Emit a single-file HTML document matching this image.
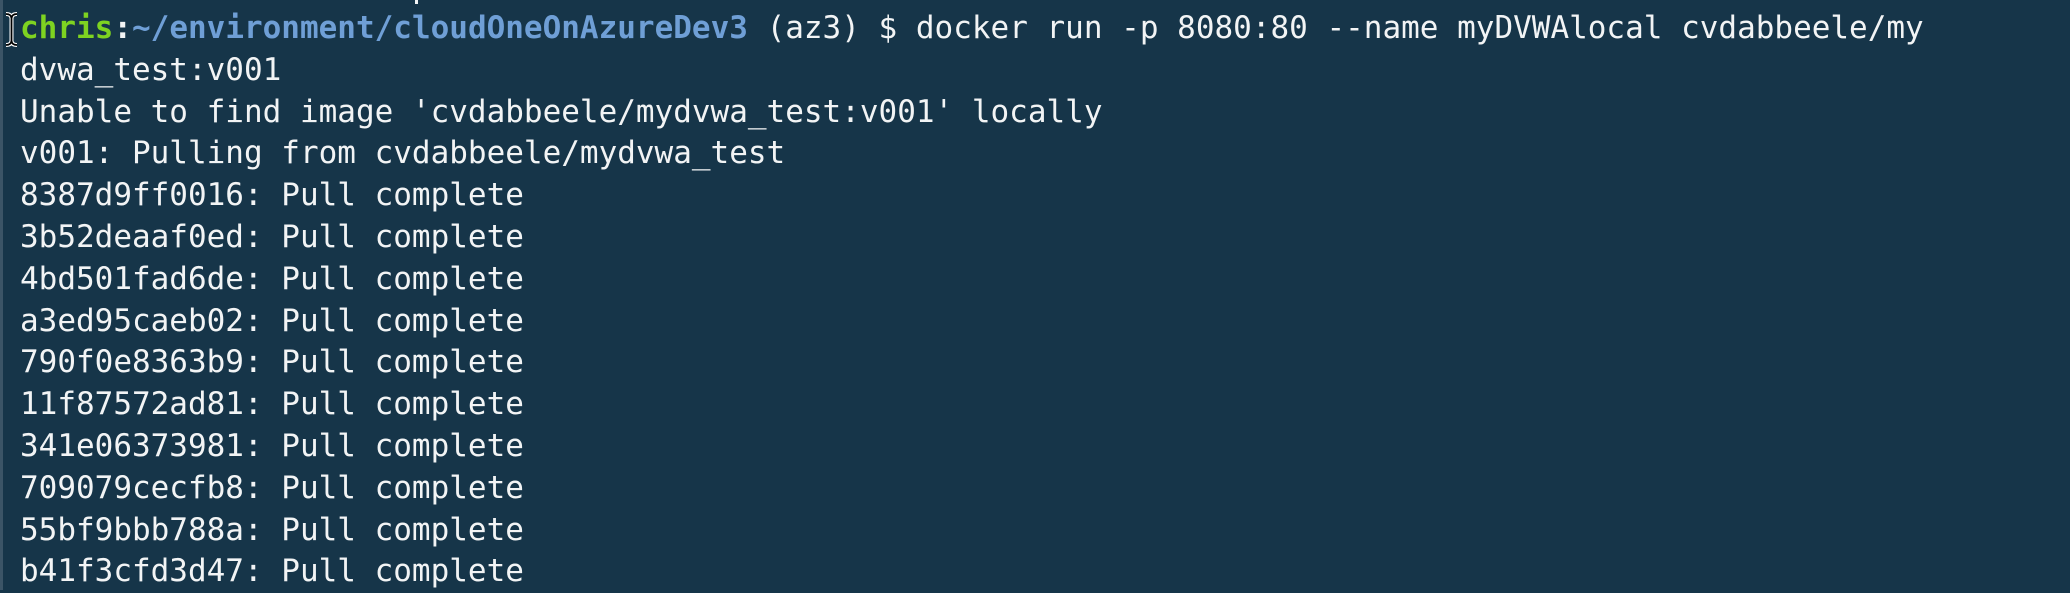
<!DOCTYPE html>
<html><head><meta charset="utf-8"><style>
html,body{margin:0;padding:0}
body{width:2070px;height:590px;overflow:hidden;background:#163549;position:relative;font-family:"DejaVu Sans Mono","Liberation Mono",monospace;}
.lb{position:absolute;left:0;top:0;width:3px;height:590px;background:#3b5466}
pre{position:absolute;left:20px;top:8px;margin:0;font-family:inherit;font-size:31px;line-height:41.8px;color:#f2f4f5;white-space:pre}
.g{color:#7ed321;font-weight:bold}
.b{color:#6f9fd6;font-weight:bold}
.w{font-weight:bold;color:#f2f4f5}
.mark{position:absolute;left:415px;top:0;width:3px;height:4px;background:#f2f4f5}
</style></head><body>
<div class="lb"></div>
<div class="mark"></div>
<svg style="position:absolute;left:4px;top:12px" width="15" height="35" viewBox="0 0 15 35">
<path d="M2 2 Q7 2 7.5 6 Q8 2 13 2 M7.5 6 V29 M2 33 Q7 33 7.5 29 Q8 33 13 33" fill="none" stroke="#fff" stroke-width="4"/>
<path d="M2 2 Q7 2 7.5 6 Q8 2 13 2 M7.5 6 V29 M2 33 Q7 33 7.5 29 Q8 33 13 33" fill="none" stroke="#000" stroke-width="1.8"/>
</svg>
<pre><span class="g">chris</span><span class="w">:</span><span class="b">~/environment/cloudOneOnAzureDev3</span> (az3) $ docker run -p 8080:80 --name myDVWAlocal cvdabbeele/my
dvwa_test:v001
Unable to find image 'cvdabbeele/mydvwa_test:v001' locally
v001: Pulling from cvdabbeele/mydvwa_test
8387d9ff0016: Pull complete
3b52deaaf0ed: Pull complete
4bd501fad6de: Pull complete
a3ed95caeb02: Pull complete
790f0e8363b9: Pull complete
11f87572ad81: Pull complete
341e06373981: Pull complete
709079cecfb8: Pull complete
55bf9bbb788a: Pull complete
b41f3cfd3d47: Pull complete</pre>
</body></html>
